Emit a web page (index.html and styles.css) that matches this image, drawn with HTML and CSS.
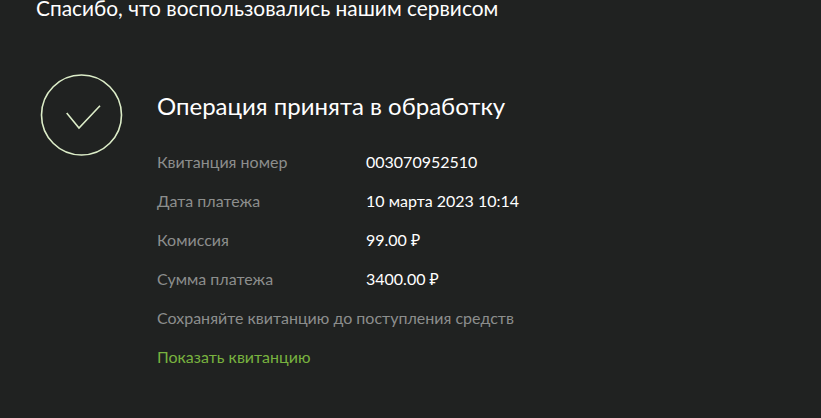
FILE: index.html
```html
<!DOCTYPE html>
<html lang="ru">
<head>
<meta charset="utf-8">
<link rel="stylesheet" href="styles.css">
</head>
<body>
<div class="page">
  <h1 class="page-title">Спасибо, что воспользовались нашим сервисом</h1>
  <div class="result">
    <div class="status-icon">
      <svg width="84" height="84" viewBox="0 0 84 84">
        <circle cx="41.5" cy="42" r="40" fill="none" stroke="#dcedc8" stroke-width="1.6"/>
        <polyline points="26.7,40 39,55 60,32.7" fill="none" stroke="#dcedc8" stroke-width="1.6"/>
      </svg>
    </div>
    <div class="details">
      <h2 class="result-title">Операция принята в обработку</h2>
      <div class="rows">
        <div class="row"><span class="label">Квитанция номер</span><span class="value">003070952510</span></div>
        <div class="row"><span class="label">Дата платежа</span><span class="value">10 марта 2023 10:14</span></div>
        <div class="row"><span class="label">Комиссия</span><span class="value">99.00 ₽</span></div>
        <div class="row"><span class="label">Сумма платежа</span><span class="value">3400.00 ₽</span></div>
      </div>
      <p class="note">Сохраняйте квитанцию до поступления средств</p>
      <a class="link" href="#">Показать квитанцию</a>
    </div>
  </div>
</div>
</body>
</html>
```
FILE: styles.css
```css
html, body {
  margin: 0;
  padding: 0;
  background: #202221;
  height: 100%;
  overflow: hidden;
}
body {
  font-family: Lato, "Noto Sans", sans-serif;
  color: #ffffff;
}
.page {
  padding: 0 0 0 36px;
}
.page-title {
  margin: -5px 0 0 0;
  font-weight: 400;
  font-size: 20.9px;
  line-height: 26px;
}
.result {
  display: flex;
  margin-top: 52px;
  margin-left: 4px;
}
.status-icon {
  width: 84px;
  height: 84px;
  flex: none;
}
.status-icon svg { display: block; }
.details {
  margin-left: 33px;
  padding-top: 19px;
}
.result-title {
  margin: 0;
  font-weight: 400;
  font-size: 24px;
  line-height: 28px;
}
.rows {
  margin-top: 32px;
}
.row {
  display: flex;
  height: 39px;
  font-size: 16px;
  line-height: 20px;
}
.label {
  width: 209px;
  color: #8c8e8d;
}
.value {
  color: #ffffff;
}
.note {
  margin: 0;
  font-size: 16px;
  line-height: 20px;
  color: #8c8e8d;
}
.link {
  display: block;
  margin-top: 19px;
  font-size: 16px;
  line-height: 20px;
  color: #78b23f;
  text-decoration: none;
}
```
